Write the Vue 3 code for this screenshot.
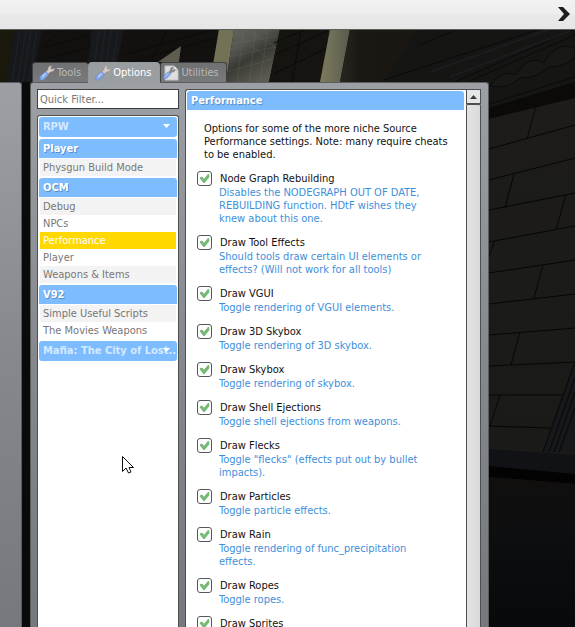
<script setup>
import { ref } from 'vue'

const filter = ref('')
const activeTab = ref('Options')
const tabs = ['Tools', 'Options', 'Utilities']

const categories = [
  { name: 'RPW', open: false, items: [] },
  { name: 'Player', open: true, items: [{ name: 'Physgun Build Mode', alt: true }] },
  {
    name: 'OCM',
    open: true,
    items: [
      { name: 'Debug', alt: true },
      { name: 'NPCs' },
      { name: 'Performance', selected: true },
      { name: 'Player' },
      { name: 'Weapons & Items', alt: true }
    ]
  },
  {
    name: 'V92',
    open: true,
    items: [{ name: 'Simple Useful Scripts', alt: true }, { name: 'The Movies Weapons' }]
  },
  { name: 'Mafia: The City of Lost...', open: false, items: [] }
]

const options = ref([
  { label: 'Node Graph Rebuilding', help: 'Disables the NODEGRAPH OUT OF DATE,\nREBUILDING function. HDtF wishes they\nknew about this one.', on: true },
  { label: 'Draw Tool Effects', help: 'Should tools draw certain UI elements or\neffects? (Will not work for all tools)', on: true },
  { label: 'Draw VGUI', help: 'Toggle rendering of VGUI elements.', on: true },
  { label: 'Draw 3D Skybox', help: 'Toggle rendering of 3D skybox.', on: true },
  { label: 'Draw Skybox', help: 'Toggle rendering of skybox.', on: true },
  { label: 'Draw Shell Ejections', help: 'Toggle shell ejections from weapons.', on: true },
  { label: 'Draw Flecks', help: 'Toggle "flecks" (effects put out by bullet\nimpacts).', on: true },
  { label: 'Draw Particles', help: 'Toggle particle effects.', on: true },
  { label: 'Draw Rain', help: 'Toggle rendering of func_precipitation\neffects.', on: true },
  { label: 'Draw Ropes', help: 'Toggle ropes.', on: true },
  { label: 'Draw Sprites', help: '', on: true }
])
</script>

<template>
  <div class="screen">
    <svg class="scene" viewBox="0 0 575 627" preserveAspectRatio="xMinYMin slice" aria-hidden="true">
      <defs>
        <linearGradient id="wall" x1="0" y1="0" x2="0" y2="1">
          <stop offset="0" stop-color="#1d1c19" />
          <stop offset="1" stop-color="#1a1a19" />
        </linearGradient>
        <linearGradient id="ground" x1="0" y1="0" x2="0" y2="1">
          <stop offset="0" stop-color="#110f0e" />
          <stop offset="0.4" stop-color="#0d0e10" />
          <stop offset="1" stop-color="#08090b" />
        </linearGradient>
        <linearGradient id="glass" x1="0" y1="0" x2="0.6" y2="1">
          <stop offset="0" stop-color="#66665f" />
          <stop offset="0.35" stop-color="#555551" />
          <stop offset="0.6" stop-color="#3a3a35" />
          <stop offset="1" stop-color="#5a5a50" />
        </linearGradient>
        <linearGradient id="beam" x1="0" y1="0" x2="1" y2="0">
          <stop offset="0" stop-color="#7d7b5c" />
          <stop offset="0.5" stop-color="#6c6b56" />
          <stop offset="1" stop-color="#5a5a4e" />
        </linearGradient>
        <linearGradient id="shade" x1="0" y1="0" x2="1" y2="0">
          <stop offset="0" stop-color="#29251f" />
          <stop offset="0.25" stop-color="#1b1713" />
          <stop offset="1" stop-color="#1a1612" />
        </linearGradient>
      </defs>
      <rect width="575" height="627" fill="#13110f" />
      <path d="M0 29H14L6 82H0Z" fill="#1b190c" />
      <path d="M14 29H42L32 82H6Z" fill="#16181b" />
      <path d="M20 29L12 82M26 29L18 82M31 29L23 82M37 29L29 82" stroke="#202327" />
      <path d="M92 29H124L117 62H88Z" fill="#17191c" />
      <path d="M99 29L95 62M105 29L101 62M111 29L107 62M118 29L113 62" stroke="#202327" />
      <path d="M42 48L90 35M42 60L90 47M124 55L215 29M130 62L215 38M45 45L62 29M150 62L168 29" stroke="#0c0b0a" />
      <path d="M158 62L181 46L179 62Z" fill="#5e5d50" />
      <path d="M219 29H234L226 82H210Z" fill="#737156" />
      <path d="M234 29H280L269 82H226Z" fill="url(#glass)" />
      <path d="M231 44L278 36M229 57L275 47M226 72L273 59M244 29L237 82M256 29L249 82M268 29L260 82M236 34L270 60M246 29L277 48" stroke="#77776f" stroke-width="0.6" opacity="0.4" />
      <path d="M280 29H330L320 82H269Z" fill="#151410" />
      <path d="M276 54L328 31M273 74L325 49M301 31L292 82M274 43L306 29" stroke="#0a0a09" />
      <path d="M330 29H350L340 82H320Z" fill="url(#beam)" />
      <path d="M350 29H424L404 82H340Z" fill="url(#shade)" />
      <path d="M418 29H575V90L489 118V82H383Z" fill="#151513" />
      <path d="M384 80L540 29M417 46L458 29M470 81L575 35M455 82L575 29M489 104L575 77" stroke="#0b0b0b" fill="none" />
      <path d="M430 72L550 29M450 77L570 31" stroke="#1b1c1e" stroke-width="2" />
      <path d="M490 86Q502 68 516 75Q528 54 544 63Q556 41 575 48V58Q561 68 548 67Q539 78 520 78Q508 90 490 86Z" fill="#181817" stroke="#0b0b0b" />
      <path d="M489 108L575 82V98L489 119Z" fill="#0b0a09" />
      <path d="M489 119L575 98V455H489Z" fill="url(#wall)" />
      <path
        d="M489 149L575 125M489 180L575 158M489 210L575 193M489 242L575 226M489 273L575 260M489 304L575 294M489 335L575 328M489 366L575 362M489 395H562M489 426L550 428M536 106L527 139M514 174L505 208M566 194L556 230M494 242L489 257M543 265L534 298M520 332L511 365M500 395L490 426"
        stroke="#060606"
        fill="none"
      />
      <path d="M575 362L543 452H575Z" fill="#17181a" />
      <path d="M575 362L543 452M575 378L549 452M575 392L554 452M575 408L559 452" stroke="#070708" />
      <path d="M489 449L575 455V475L489 469Z" fill="#101215" />
      <path d="M489 466L575 474V484L489 477Z" fill="#030303" />
      <path d="M489 477L575 484V627H489Z" fill="url(#ground)" />
      <path d="M22 82H30V627H22Z" fill="#0a0a0b" />
    </svg>

    <header class="topbar">
      <button class="next" type="button" aria-label="Next">
        <svg width="14" height="16" viewBox="0 0 14 16"><path d="M1 1H6L13 8L6 15H1L7 8Z" fill="#1d1d1d" /></svg>
      </button>
    </header>

    <main class="workspace">
      <aside class="side-panel"></aside>

      <section class="menu">
        <nav class="tabs">
          <button
            v-for="tab in tabs"
            :key="tab"
            type="button"
            class="tab"
            :class="{ active: tab === activeTab }"
            @click="activeTab = tab"
          >
            <svg class="tab-icon" width="16" height="16" viewBox="0 0 16 16" aria-hidden="true">
              <path v-if="tab === 'Utilities'" d="M2 1H11L15 5V15H2Z" fill="#dcdedf" stroke="#c3c5c8" />
              <path v-if="tab === 'Utilities'" d="M11 1V5H15" fill="#f6f6f6" stroke="#aeb0b3" />
              <g :class="{ small: tab === 'Utilities' }">
                <path d="M7 7L9 4.500Q8.500 1.500 12 0.500L13 1L11.500 3L13 4.500L15 3L15.500 4Q15 7 11.500 7L9 9Z" :fill="tab === 'Utilities' ? '#85888c' : '#d9cdc8'" stroke="#938b87" stroke-width="0.5" />
                <path d="M6.500 6.500L9.500 9.500L5.500 14Q3.500 16 1.500 15Q-0.500 13 1.500 11Z" fill="#86a9ec" stroke="#6485c9" stroke-width="0.6" />
                <path d="M6.500 8.500L3 12" stroke="#bdd2fa" stroke-width="1.200" />
              </g>
            </svg>
            <span>{{ tab }}</span>
          </button>
        </nav>

        <div class="panel">
          <div class="browser">
            <input v-model="filter" class="filter" type="text" placeholder="Quick Filter..." aria-label="Quick Filter" />
            <div class="tree">
              <section v-for="cat in categories" :key="cat.name" class="category" :class="{ closed: !cat.open }">
                <button type="button" class="category-head">
                  <span>{{ cat.name }}</span>
                  <svg v-if="!cat.open" class="caret" width="7" height="4" viewBox="0 0 7 4" aria-hidden="true"><path d="M0 0H7L3.500 4Z" fill="#fff" /></svg>
                </button>
                <button
                  v-for="item in cat.items"
                  :key="item.name"
                  type="button"
                  class="entry"
                  :class="{ alt: item.alt, selected: item.selected }"
                >
                  {{ item.name }}
                </button>
              </section>
            </div>
          </div>

          <div class="content">
            <div class="sheet">
              <h1 class="title">Performance</h1>
              <p class="intro">Options for some of the more niche Source<br />Performance settings. Note: many require cheats<br />to be enabled.</p>
              <div v-for="(opt, i) in options" :key="opt.label" class="option">
                <label class="option-label" :for="'opt' + i">
                  <span class="box">
                    <input :id="'opt' + i" v-model="opt.on" type="checkbox" />
                    <svg v-if="opt.on" width="15" height="15" viewBox="0 0 15 15" aria-hidden="true">
                      <path d="M3 7L5 6L7 8.500L11.500 3L12 6L7 12Z" fill="#74b874" stroke="#74b874" stroke-width="1" />
                    </svg>
                  </span>
                  <span>{{ opt.label }}</span>
                </label>
                <p v-if="opt.help" class="help">{{ opt.help }}</p>
              </div>
            </div>
            <div class="scrollbar">
              <button type="button" class="scroll-up" aria-label="Scroll up">
                <svg width="7" height="4" viewBox="0 0 7 4"><path d="M3.500 0L7 4H0Z" fill="#3c3c3c" /></svg>
              </button>
              <div class="thumb"></div>
            </div>
          </div>
        </div>
      </section>
    </main>

    <svg class="cursor" width="12" height="18" viewBox="0 0 12 18" aria-hidden="true">
      <path d="M0.500 0.500V15.500L4 12L6.500 17L9 16L7 11.500H11.500Z" fill="#fff" stroke="#111" />
    </svg>
  </div>
</template>

<style>
body {
  background: #100f0e;
}
</style>

<style scoped>
.screen {
  position: relative;
  display: flex;
  flex-direction: column;
  height: 100vh;
  overflow: hidden;
  font-family: "DejaVu Sans Condensed", "DejaVu Sans", sans-serif;
  font-size: 11px;
  line-height: 13px;
  color: #111;
}
button,
input {
  margin: 0;
  padding: 0;
  border: 0;
  font: inherit;
  color: inherit;
  background: none;
}
svg {
  display: block;
}
.scene {
  position: absolute;
  inset: 0;
  width: 100%;
  height: 100%;
}
.topbar {
  position: relative;
  display: flex;
  align-items: center;
  justify-content: flex-end;
  flex: none;
  box-sizing: border-box;
  height: 30px;
  padding: 0 4px 2px;
  border-bottom: 1px solid #5a5e58;
  background: linear-gradient(#f1f1f1, #eeeeee 45%, #e8e8e8 55%, #e6e6e6);
}
.workspace {
  position: relative;
  display: flex;
  gap: 8px;
  flex: 1;
  min-height: 0;
  padding-right: 86px;
}
.side-panel {
  width: 22px;
  box-sizing: border-box;
  margin-top: 52px;
  border: solid #5a5d60;
  border-width: 1px 1px 0 0;
  border-radius: 0 3px 0 0;
  background: linear-gradient(#9c9fa3, #85898d 50%, #75787c);
}
.menu {
  display: flex;
  flex-direction: column;
  flex: 1;
  min-width: 0;
  padding-top: 32px;
}
.tabs {
  display: flex;
  height: 20px;
  padding-left: 2px;
}
.tab {
  display: flex;
  align-items: center;
  gap: 2px;
  box-sizing: border-box;
  height: 20px;
  padding: 0 7px 0 6px;
  border: solid #3f4143;
  border-width: 1px 1px 0;
  border-radius: 3px 3px 0 0;
  background: linear-gradient(#6f7173, #77797b);
  color: #b9babb;
}
.tab:first-child {
  border-right: 0;
}
.tab:last-child {
  padding: 0 7px 0 2px;
}
.tab.active {
  position: relative;
  height: 21px;
  padding: 0 8px 0 6px;
  border-color: #96999c;
  border-bottom: 1px solid #9b9ea1;
  border-radius: 4px 4px 0 0;
  background: #9b9ea1;
  color: #fff;
}
.small {
  transform: scale(0.8) translate(0, 2px);
}
.panel {
  display: flex;
  gap: 6px;
  flex: 1;
  min-height: 0;
  padding: 6px 7px 0 6px;
  border: solid #5a5d60;
  border-width: 1px 1px 0;
  border-radius: 3px 3px 0 0;
  background: linear-gradient(#9c9fa3, #85898d 50%, #75787c);
}
.browser {
  display: flex;
  flex-direction: column;
  gap: 6px;
  flex: none;
  width: 142px;
}
.filter {
  box-sizing: border-box;
  width: 100%;
  height: 20px;
  padding: 0 2px;
  border: 1px solid #3c3e40;
  background: #fff;
}
.filter::placeholder {
  color: #777;
  opacity: 1;
}
.tree {
  display: flex;
  flex-direction: column;
  gap: 2px;
  flex: 1;
  min-height: 0;
  overflow: hidden;
  padding: 1px 1px 0;
  border: solid #4d5053;
  border-width: 1px 1px 0;
  border-radius: 3px 3px 0 0;
  background: #fff;
}
.category {
  display: flex;
  flex-direction: column;
}
.category-head {
  display: flex;
  align-items: center;
  position: relative;
  height: 19px;
  margin-bottom: 1px;
  padding: 0 4px;
  border-radius: 3px 3px 0 0;
  background: #7dbdff;
  color: #fff;
  font-weight: bold;
  text-align: left;
  white-space: nowrap;
  text-shadow: 1px 1px 0 #5a8fc4;
}
.closed .category-head {
  box-sizing: border-box;
  height: 20px;
  margin-bottom: 0;
  padding-bottom: 2px;
  border-radius: 3px;
  color: #d5e9ff;
  text-shadow: none;
}
.caret {
  position: absolute;
  right: 7px;
}
.entry {
  height: 17px;
  margin: 0 1px;
  padding: 0 3px;
  color: #777;
  text-align: left;
  white-space: nowrap;
}
.entry.alt {
  background: #f3f3f3;
}
.entry.selected {
  background: #ffd800;
  color: #fff;
}
.content {
  display: flex;
  flex: 1;
  min-width: 0;
}
.sheet {
  flex: 1;
  min-width: 0;
  overflow: hidden;
  padding: 1px 2px 0 1px;
  border: solid #4d5053;
  border-width: 1px 0 0 1px;
  border-radius: 3px 0 0 0;
  background: #fff;
}
.title {
  height: 19px;
  margin: 0;
  padding: 0 4px;
  border-radius: 3px 3px 0 0;
  background: #7dbdff;
  color: #fff;
  font-size: 11px;
  line-height: 20px;
  text-shadow: 1px 1px 0 #5a8fc4;
}
.intro {
  margin: 12px 0 10px;
  padding-left: 17px;
  white-space: nowrap;
}
.option {
  margin-bottom: 10px;
  padding-left: 10px;
}
.option-label {
  display: flex;
  align-items: center;
  gap: 8px;
  height: 15px;
}
.box {
  display: grid;
}
.box > * {
  grid-area: 1 / 1;
}
.box input {
  appearance: none;
  box-sizing: border-box;
  width: 15px;
  height: 15px;
  border: 1px solid #55585a;
  border-radius: 3px;
  background: #fdfdfd;
}
.box svg {
  pointer-events: none;
}
.help {
  margin: 0;
  padding-left: 22px;
  color: #3d8fdb;
  white-space: pre;
}
.scrollbar {
  display: flex;
  flex-direction: column;
  flex: none;
  width: 15px;
}
.scroll-up {
  display: grid;
  place-items: center;
  box-sizing: border-box;
  height: 15px;
  border: 1px solid #4d5053;
  background: #e6e6e6;
}
.thumb {
  flex: 1;
  border: solid #4d5053;
  border-width: 1px 1px 0;
  border-radius: 2px 2px 0 0;
  background: linear-gradient(90deg, #e3e3e3, #dadada);
}
.cursor {
  position: absolute;
  left: 122px;
  top: 456px;
}
</style>
